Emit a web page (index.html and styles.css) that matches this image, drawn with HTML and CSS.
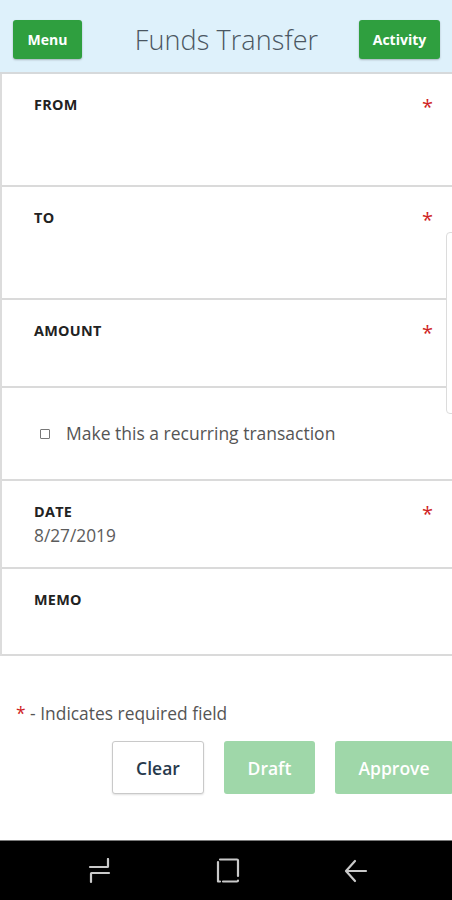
FILE: index.html
```html
<!DOCTYPE html>
<html lang="en">
<head>
<meta charset="utf-8">
<title>Funds Transfer</title>
<link rel="stylesheet" href="styles.css">
</head>
<body>
<div class="screen">
  <header class="topbar">
    <button class="btn-top btn-menu">Menu</button>
    <h1 class="title">Funds Transfer</h1>
    <button class="btn-top btn-activity">Activity</button>
  </header>

  <main class="content">
    <section class="form">
      <div class="row row-tall">
        <span class="label">FROM</span>
        <span class="req">*</span>
      </div>
      <div class="row row-tall">
        <span class="label">TO</span>
        <span class="req">*</span>
      </div>
      <div class="row row-mid">
        <span class="label">AMOUNT</span>
        <span class="req">*</span>
      </div>
      <div class="row row-check">
        <label class="check">
          <span class="box"></span>
          <span class="check-text">Make this a recurring transaction</span>
        </label>
      </div>
      <div class="row row-mid">
        <div class="field">
          <span class="label">DATE</span>
          <span class="value">8/27/2019</span>
        </div>
        <span class="req">*</span>
      </div>
      <div class="row row-memo">
        <span class="label">MEMO</span>
      </div>
    </section>
    <div class="side-tab"></div>

    <p class="note"><span class="note-star">*</span> - Indicates required field</p>

    <div class="actions">
      <button class="act act-clear">Clear</button>
      <button class="act act-green">Draft</button>
      <button class="act act-green act-wide">Approve</button>
    </div>
  </main>

  <nav class="navbar">
    <svg class="nav-ico" width="24" height="26" viewBox="0 0 24 26">
      <path d="M20 1 V8.5 Q20 9 19.5 9 H2" />
      <path d="M21 15 H3.5 Q3 15 3 15.5 V24" />
    </svg>
    <svg class="nav-ico" width="24" height="26" viewBox="0 0 24 26">
      <path d="M4 1.5 H21 Q22 1.5 22 2.5 V18" />
      <path d="M22 22.5 Q22 23.5 21 23.5 H7" />
      <path d="M2 4 V23.5 H4" />
    </svg>
    <svg class="nav-ico" width="24" height="26" viewBox="0 0 24 26">
      <path d="M22 13 H3" />
      <path d="M11 3 L2 13 L11 23" />
    </svg>
  </nav>
</div>
</body>
</html>
```

FILE: styles.css
```css
* { box-sizing: border-box; }

html, body {
  margin: 0;
  padding: 0;
  background: #ffffff;
}

body {
  font-family: "Open Sans", "Noto Sans", "Liberation Sans", sans-serif;
  width: 452px;
  height: 900px;
  overflow: hidden;
}

.screen {
  position: relative;
  display: flex;
  flex-direction: column;
  height: 900px;
}

.topbar {
  height: 74px;
  background: #def1fb;
  border-bottom: 2px solid #d6d9db;
  display: grid;
  grid-template-columns: 1fr auto 1fr;
  align-items: center;
  padding: 6px 12px 0 13px;
}

.btn-top {
  border: none;
  background: #2f9f3f;
  color: #ffffff;
  font-family: inherit;
  font-weight: 700;
  font-size: 14px;
  height: 39px;
  border-radius: 3px;
  box-shadow: 0 1px 2px rgba(0, 0, 0, 0.25);
  padding: 0;
}

.btn-menu { width: 69px; justify-self: start; }
.btn-activity { width: 81px; justify-self: end; }

.title {
  margin: 0;
  font-size: 27px;
  font-weight: 300;
  color: #4a5661;
  letter-spacing: 0.1px;
}

.content {
  position: relative;
  flex: 1;
}

.form {
  border-left: 2px solid #dcdcdc;
}

.row {
  display: flex;
  justify-content: space-between;
  align-items: flex-start;
  padding: 22px 19px 0 32px;
  border-bottom: 2px solid #dadada;
}

.row-tall { height: 113px; }
.row-mid { height: 88px; }
.row-check { height: 93px; align-items: center; padding-top: 0; padding-left: 38px; }
.row-memo { height: 87px; }

.label {
  font-size: 14.4px;
  line-height: 18px;
  font-weight: 700;
  color: #222;
  letter-spacing: 0.3px;
}

.req {
  color: #cf1f25;
  font-size: 20px;
  line-height: 18px;
  padding-top: 2px;
}

.field {
  display: flex;
  flex-direction: column;
}

.value {
  margin-top: 4px;
  font-size: 17.3px;
  line-height: 22px;
  color: #5c5c5c;
}

.check {
  display: flex;
  align-items: center;
  gap: 16px;
}

.box {
  width: 10px;
  height: 10px;
  border: 1px solid #777;
  border-radius: 1px;
}

.check-text {
  font-size: 17.5px;
  color: #555;
  padding-bottom: 1px;
}

.side-tab {
  position: absolute;
  right: -10px;
  top: 158px;
  width: 16px;
  height: 182px;
  border: 1px solid #dcdcdc;
  border-radius: 4px;
  background: #ffffff;
}

.note {
  margin: 46px 0 0 16px;
  font-size: 17.4px;
  line-height: 22px;
  color: #555;
}

.note-star { color: #cf1f25; }

.actions {
  display: flex;
  justify-content: flex-end;
  gap: 20px;
  margin: 17px -1px 0 0;
}

.act {
  height: 53px;
  border-radius: 3px;
  font-family: inherit;
  font-size: 17.5px;
  font-weight: 600;
  padding: 0;
}

.act-clear {
  width: 92px;
  background: #ffffff;
  border: 1px solid #c9c9c9;
  color: #27394b;
  box-shadow: 0 1px 2px rgba(0, 0, 0, 0.12);
}

.act-green {
  width: 91px;
  border: none;
  background: #9fd7a9;
  color: #ffffff;
}

.act-wide { width: 118px; }

.navbar {
  height: 60px;
  background: #000000;
  border-top: 1px solid #7a7a7a;
  display: flex;
  align-items: center;
  padding: 0 0 0 88px;
  gap: 104px;
}

.nav-ico {
  fill: none;
  stroke: #c9c9c9;
  stroke-width: 2.2;
  stroke-linecap: round;
  stroke-linejoin: round;
}
```
